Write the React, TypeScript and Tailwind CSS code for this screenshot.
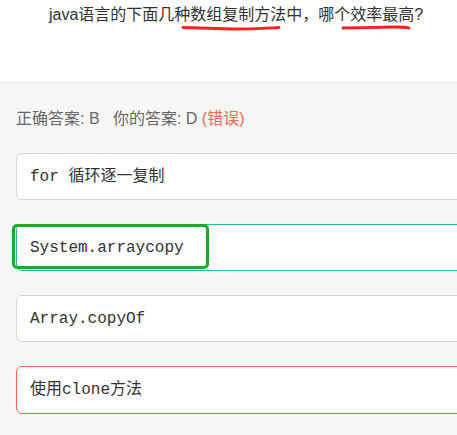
import React from "react";

const mono = { fontFamily: '"Liberation Mono", "Noto Sans CJK SC", monospace' };

export default function App() {
  return (
    <div
      className="relative w-[457px] h-[435px] overflow-hidden bg-white"
      style={{ fontFamily: '"Liberation Sans", "Noto Sans CJK SC", sans-serif' }}
    >
      <div className="relative h-[82px] pl-[49px] pt-[3px]">
        <div className="text-[16px] leading-[24px] text-[#333] whitespace-nowrap">
          java语言的下面几种数组复制方法中，哪个效率最高?
        </div>
        <svg className="absolute left-0 top-0" width="457" height="40" viewBox="0 0 457 40">
          <path
            d="M183 27.5 C 200 28, 215 28.5, 232 29 C 250 29.2, 265 28.2, 279 27.5"
            stroke="#ff1d1d"
            strokeWidth="2.8"
            fill="none"
            strokeLinecap="round"
          />
          <path
            d="M343 28 C 360 27.6, 380 27.2, 395 27 C 402 27, 406 27.3, 409 28"
            stroke="#ff1d1d"
            strokeWidth="2.8"
            fill="none"
            strokeLinecap="round"
          />
        </svg>
      </div>
      <div className="h-[353px] border-t border-[#ebebeb] bg-[#f7f7f7] pl-[16px] pt-[24px]">
        <div className="text-[16px] leading-[24px] text-[#666] whitespace-nowrap">
          正确答案: B &nbsp; 你的答案: D <span className="text-[#f5664f]">(错误)</span>
        </div>
        <div className="mt-[22px] flex flex-col gap-[24px]">
          <div
            className="w-[480px] h-[47px] flex items-center pl-[13px] bg-white border border-[#d6d6d6] rounded-[6px] text-[16px] text-[#333] whitespace-nowrap"
            style={mono}
          >
            for 循环逐一复制
          </div>
          <div className="relative">
            <div
              className="w-[480px] h-[47px] flex items-center pl-[13px] bg-white border border-[#25bb9b] rounded-[6px] text-[16px] text-[#333] whitespace-nowrap"
              style={mono}
            >
              System.arraycopy
            </div>
            <div className="absolute left-[-4px] top-0 w-[197px] h-[45px] border-[3px] border-[#1caa29] rounded-[5px]" />
          </div>
          <div
            className="w-[480px] h-[47px] flex items-center pl-[13px] bg-white border border-[#d6d6d6] rounded-[6px] text-[16px] text-[#333] whitespace-nowrap"
            style={mono}
          >
            Array.copyOf
          </div>
          <div
            className="w-[480px] h-[48px] flex items-center pl-[13px] bg-white border border-[#f5664f] rounded-[6px] text-[16px] text-[#333] whitespace-nowrap"
            style={mono}
          >
            使用clone方法
          </div>
        </div>
      </div>
    </div>
  );
}
